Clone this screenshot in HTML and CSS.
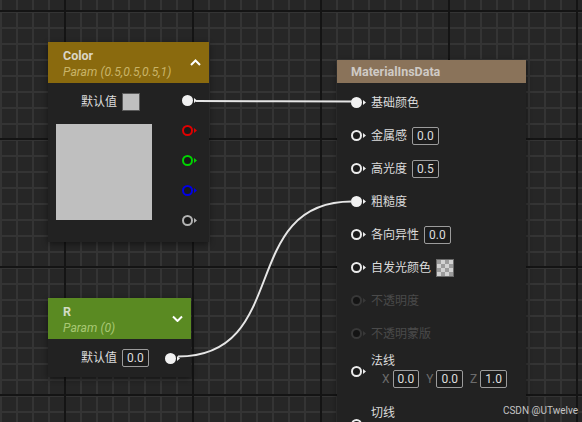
FILE: index.html
```html
<!DOCTYPE html>
<html lang="zh">
<head>
<meta charset="utf-8">
<title>Material Graph</title>
<link rel="stylesheet" href="styles.css">
</head>
<body>
<div class="canvas">

  <div class="node node-color">
    <div class="node-head head-gold">
      <div class="head-text">
        <div class="title">Color</div>
        <div class="subtitle">Param (0.5,0.5,0.5,1)</div>
      </div>
      <svg class="chev" width="11" height="7" viewBox="0 0 11 7"><polyline points="1,6 5.5,1.5 10,6" /></svg>
    </div>
    <div class="node-body color-body">
      <div class="color-left">
        <div class="prop-row">
          <span class="label">默认值</span>
          <span class="swatch-sm"></span>
        </div>
        <div class="swatch-big"></div>
      </div>
      <div class="pin-col">
        <svg class="pin" width="15" height="11" viewBox="0 0 15 11"><circle cx="5.5" cy="5.5" r="5.5" fill="#f2f2f2"/><polygon points="12,3 15,5.5 12,8" fill="#f2f2f2"/></svg>
        <svg class="pin" width="15" height="11" viewBox="0 0 15 11"><circle cx="5.5" cy="5.5" r="4.5" fill="#1a1a1a" stroke="#e00000" stroke-width="2"/><polygon points="12,3 15,5.5 12,8" fill="#e00000"/></svg>
        <svg class="pin" width="15" height="11" viewBox="0 0 15 11"><circle cx="5.5" cy="5.5" r="4.5" fill="#1a1a1a" stroke="#00d400" stroke-width="2"/><polygon points="12,3 15,5.5 12,8" fill="#00d400"/></svg>
        <svg class="pin" width="15" height="11" viewBox="0 0 15 11"><circle cx="5.5" cy="5.5" r="4.5" fill="#1a1a1a" stroke="#0000e6" stroke-width="2"/><polygon points="12,3 15,5.5 12,8" fill="#0000e6"/></svg>
        <svg class="pin" width="15" height="11" viewBox="0 0 15 11"><circle cx="5.5" cy="5.5" r="4.5" fill="#1a1a1a" stroke="#b4b4b4" stroke-width="2"/><polygon points="12,3 15,5.5 12,8" fill="#b4b4b4"/></svg>
      </div>
    </div>
  </div>

  <div class="node node-r">
    <div class="node-head head-green">
      <div class="head-text">
        <div class="title">R</div>
        <div class="subtitle">Param (0)</div>
      </div>
      <svg class="chev" width="11" height="7" viewBox="0 0 11 7"><polyline points="1,1.5 5.5,6 10,1.5" /></svg>
    </div>
    <div class="node-body r-body">
      <span class="label">默认值</span>
      <span class="val">0.0</span>
      <svg class="pin pin-out" width="15" height="11" viewBox="0 0 15 11"><circle cx="5.5" cy="5.5" r="5.5" fill="#f2f2f2"/><polygon points="12,3 15,5.5 12,8" fill="#f2f2f2"/></svg>
    </div>
  </div>

  <div class="node node-mat">
    <div class="node-head head-brown">
      <div class="title">MaterialInsData</div>
    </div>
    <div class="node-body mat-body">
      <div class="in-row">
        <svg class="pin" width="15" height="11" viewBox="0 0 15 11"><circle cx="5.5" cy="5.5" r="5.5" fill="#f2f2f2"/><polygon points="12,3 15,5.5 12,8" fill="#f2f2f2"/></svg>
        <span class="label">基础颜色</span>
      </div>
      <div class="in-row">
        <svg class="pin" width="15" height="11" viewBox="0 0 15 11"><circle cx="5.5" cy="5.5" r="4.5" fill="#1a1a1a" stroke="#ececec" stroke-width="2"/><polygon points="12,3 15,5.5 12,8" fill="#ececec"/></svg>
        <span class="label">金属感</span>
        <span class="val">0.0</span>
      </div>
      <div class="in-row">
        <svg class="pin" width="15" height="11" viewBox="0 0 15 11"><circle cx="5.5" cy="5.5" r="4.5" fill="#1a1a1a" stroke="#ececec" stroke-width="2"/><polygon points="12,3 15,5.5 12,8" fill="#ececec"/></svg>
        <span class="label">高光度</span>
        <span class="val">0.5</span>
      </div>
      <div class="in-row">
        <svg class="pin" width="15" height="11" viewBox="0 0 15 11"><circle cx="5.5" cy="5.5" r="5.5" fill="#f2f2f2"/><polygon points="12,3 15,5.5 12,8" fill="#f2f2f2"/></svg>
        <span class="label">粗糙度</span>
      </div>
      <div class="in-row">
        <svg class="pin" width="15" height="11" viewBox="0 0 15 11"><circle cx="5.5" cy="5.5" r="4.5" fill="#1a1a1a" stroke="#ececec" stroke-width="2"/><polygon points="12,3 15,5.5 12,8" fill="#ececec"/></svg>
        <span class="label">各向异性</span>
        <span class="val">0.0</span>
      </div>
      <div class="in-row">
        <svg class="pin" width="15" height="11" viewBox="0 0 15 11"><circle cx="5.5" cy="5.5" r="4.5" fill="#1a1a1a" stroke="#ececec" stroke-width="2"/><polygon points="12,3 15,5.5 12,8" fill="#ececec"/></svg>
        <span class="label">自发光颜色</span>
        <span class="checker"></span>
      </div>
      <div class="in-row disabled">
        <svg class="pin" width="15" height="11" viewBox="0 0 15 11"><circle cx="5.5" cy="5.5" r="4.5" fill="#141414" stroke="#383838" stroke-width="2"/><polygon points="12,3 15,5.5 12,8" fill="#383838"/></svg>
        <span class="label">不透明度</span>
      </div>
      <div class="in-row disabled">
        <svg class="pin" width="15" height="11" viewBox="0 0 15 11"><circle cx="5.5" cy="5.5" r="4.5" fill="#141414" stroke="#383838" stroke-width="2"/><polygon points="12,3 15,5.5 12,8" fill="#383838"/></svg>
        <span class="label">不透明蒙版</span>
      </div>
      <div class="vec-row">
        <svg class="pin" width="15" height="11" viewBox="0 0 15 11"><circle cx="5.5" cy="5.5" r="4.5" fill="#1a1a1a" stroke="#ececec" stroke-width="2"/><polygon points="12,3 15,5.5 12,8" fill="#ececec"/></svg>
        <div class="vec-content">
          <span class="label">法线</span>
          <div class="vec">
            <span class="vec-item"><span class="axis">X</span><span class="val">0.0</span></span>
            <span class="vec-item"><span class="axis">Y</span><span class="val">0.0</span></span>
            <span class="vec-item"><span class="axis">Z</span><span class="val">1.0</span></span>
          </div>
        </div>
      </div>
      <div class="vec-row vec-row-clipped">
        <svg class="pin" width="15" height="11" viewBox="0 0 15 11"><circle cx="5.5" cy="5.5" r="4.5" fill="#1a1a1a" stroke="#ececec" stroke-width="2"/><polygon points="12,3 15,5.5 12,8" fill="#ececec"/></svg>
        <div class="vec-content">
          <span class="label">切线</span>
        </div>
      </div>
    </div>
  </div>

  <svg class="wires" width="582" height="422" viewBox="0 0 582 422">
    <path d="M196 101 C 260 101, 290 101.5, 352 101.5" />
    <path d="M178 356.5 C 292 356.5, 237 201.5, 352 201.5" />
  </svg>

  <div class="watermark">CSDN @UTwelve</div>
</div>
</body>
</html>
```

FILE: styles.css
```css
html, body {
  margin: 0;
  padding: 0;
  background: #262626;
}

body {
  font-family: Roboto, "Noto Sans CJK SC", sans-serif;
  font-size: 12px;
  color: #dcdcdc;
}

.canvas {
  position: relative;
  width: 582px;
  height: 422px;
  overflow: hidden;
  background-color: #262626;
  background-image:
    linear-gradient(to bottom, #141414 0 2px, transparent 2px),
    linear-gradient(to right, #141414 0 2px, transparent 2px),
    linear-gradient(to bottom, #343434 0 2px, transparent 2px),
    linear-gradient(to right, #343434 0 2px, transparent 2px);
  background-size: 100% 128px, 128px 100%, 100% 16px, 16px 100%;
  background-position: 0 10px, 64px 0, 0 11px, 0 0;
}

/* ---------- nodes ---------- */
.node {
  position: absolute;
  background: #222222;
  box-shadow: 0 2px 6px rgba(0, 0, 0, 0.45);
}

.node-color { left: 48px; top: 42px; width: 161px; }
.node-r     { left: 48px; top: 298px; width: 143px; }
.node-mat   { left: 337px; top: 60px; width: 189px; height: 400px; }

.node-head {
  display: flex;
  justify-content: space-between;
  height: 41px;
  padding: 0 8px 0 15px;
  box-sizing: border-box;
}

.head-gold  { background: #8a6a0e; }
.head-green { background: #5a8a22; }
.head-brown {
  background: #8a735a;
  height: 23px;
  padding-left: 14px;
  align-items: center;
}

.head-text {
  padding-top: 5px;
}

.title {
  font-weight: bold;
  font-size: 12.5px;
  line-height: 17px;
  color: #dcd6c6;
}

.head-green .title { color: #d2dcc4; }
.head-brown .title { color: #cfcac5; font-size: 12.5px; line-height: 23px; }

.subtitle {
  font-style: italic;
  font-size: 12.2px;
  line-height: 17px;
  color: #c9b468;
}

.head-green .subtitle { color: #a8c874; }

.chev {
  align-self: center;
  fill: none;
  stroke: #ffffff;
  stroke-width: 2;
}

.label {
  font-size: 12px;
  line-height: 16px;
  white-space: nowrap;
  color: #dcdcdc;
}

.val {
  display: inline-block;
  height: 18px;
  box-sizing: border-box;
  padding: 0 4px;
  border: 1px solid #9c9c9c;
  border-radius: 2px;
  font-size: 12px;
  line-height: 16px;
  color: #dedede;
  background: #1c1c1c;
}

.pin { display: block; flex: none; }

/* ---------- Color node body ---------- */
.color-body {
  display: flex;
  justify-content: space-between;
  padding-bottom: 16px;
}

.color-left {
  padding-top: 10px;
}

.prop-row {
  display: flex;
  align-items: center;
  gap: 5px;
  height: 18px;
  margin-left: 33px;
}

.swatch-sm {
  width: 18px;
  height: 18px;
  box-sizing: border-box;
  border: 1px solid #5a5a5a;
  background: #bfbfbf;
}

.swatch-big {
  width: 96px;
  height: 96px;
  margin: 13px 0 0 8px;
  background: #bfbfbf;
}

.pin-col {
  display: flex;
  flex-direction: column;
  gap: 19px;
  padding-top: 12px;
  margin-right: 12px;
}

/* ---------- R node body ---------- */
.r-body {
  display: flex;
  align-items: center;
  gap: 5px;
  padding: 10px 11px 10px 33px;
}

.r-body .pin-out { margin-left: auto; }

/* ---------- Material node body ---------- */
.mat-body {
  padding-top: 3px;
}

.in-row {
  display: flex;
  align-items: center;
  height: 33px;
  padding-left: 14px;
  gap: 5px;
}

.in-row.disabled .label { color: #4a4a4a; }

.checker {
  width: 18px;
  height: 18px;
  box-sizing: border-box;
  border: 1px solid #6a6a6a;
  background: repeating-conic-gradient(#d2d2d2 0 25%, #9c9c9c 0 50%) 0 0 / 8px 8px;
}

.vec-row {
  display: flex;
  align-items: center;
  gap: 5px;
  padding: 4px 0 14px 14px;
}

.vec-row-clipped {
  align-items: flex-start;
}

.vec-row-clipped .pin {
  margin-top: 13px;
}

.vec-content {
  display: flex;
  flex-direction: column;
}

.vec-content .label { line-height: 14px; }

.vec {
  display: flex;
  gap: 7px;
  margin: 2px 0 0 11px;
}

.vec-item {
  display: flex;
  align-items: center;
  gap: 3px;
}

.axis {
  color: #6c6c6c;
  font-size: 12px;
  line-height: 18px;
}

/* ---------- wires & overlay ---------- */
.wires {
  position: absolute;
  left: 0;
  top: 0;
  pointer-events: none;
}

.wires path {
  fill: none;
  stroke: #e6e6e6;
  stroke-width: 2;
}

.watermark {
  position: absolute;
  right: 4px;
  top: 404px;
  font-family: Roboto, sans-serif;
  font-size: 10px;
  line-height: 13px;
  color: #c4c4c4;
}
```
